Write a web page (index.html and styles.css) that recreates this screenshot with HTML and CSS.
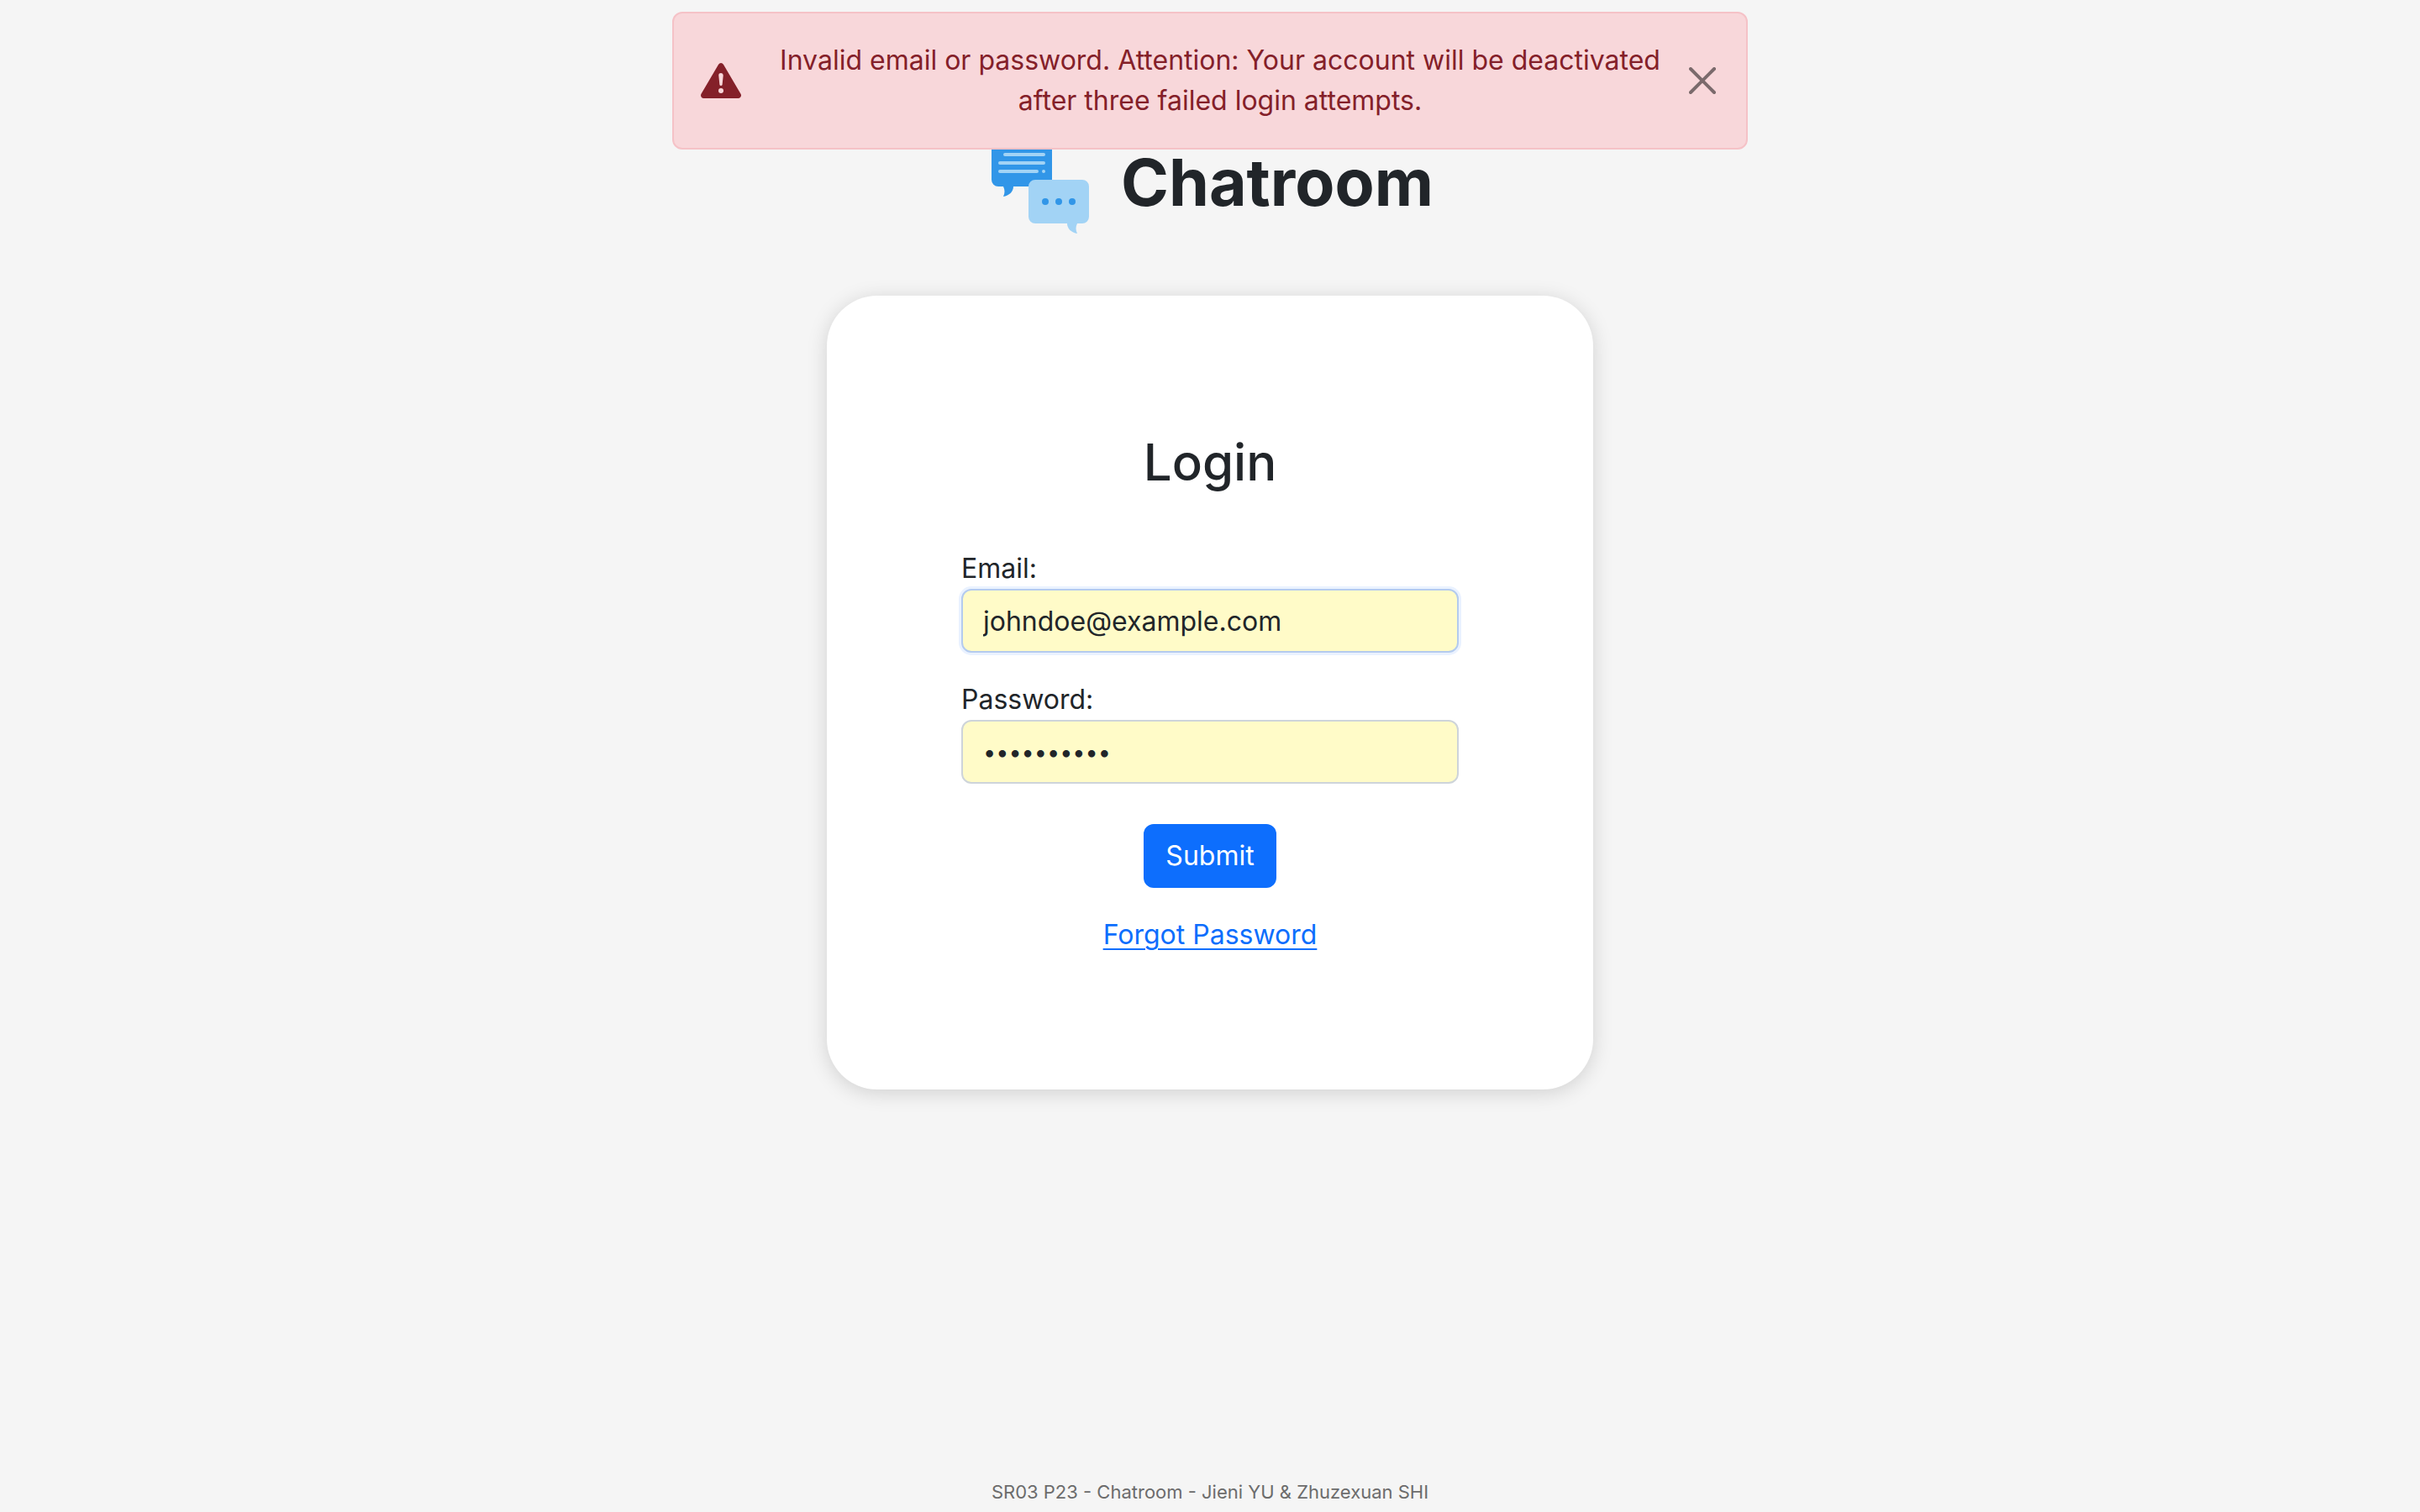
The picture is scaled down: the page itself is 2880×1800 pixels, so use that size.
FILE: index.html
```html
<!DOCTYPE html>
<html lang="en">
<head>
  <meta charset="utf-8">
  <meta name="viewport" content="width=device-width, initial-scale=1">
  <title>Chatroom - Login</title>
  <link rel="stylesheet" href="styles.css">
</head>
<body class="page">
  <div class="alert" role="alert">
    <svg class="alert-icon" viewBox="0 0 16 16" fill="currentColor" aria-hidden="true">
      <path d="M8.982 1.566a1.13 1.13 0 0 0-1.96 0L.165 13.233c-.457.778.091 1.767.98 1.767h13.713c.889 0 1.438-.99.98-1.767L8.982 1.566zM8 5c.535 0 .954.462.9.995l-.35 3.507a.552.552 0 0 1-1.1 0L7.1 5.995A.905.905 0 0 1 8 5zm.002 6a1 1 0 1 1 0 2 1 1 0 0 1 0-2z"/>
    </svg>
    <p class="alert-text">Invalid email or password. Attention: Your account will be deactivated after three failed login attempts.</p>
    <button class="alert-close" type="button" aria-label="Close">
      <svg class="close-icon" viewBox="0 0 16 16" aria-hidden="true">
        <path d="M.293.293a1 1 0 0 1 1.414 0L8 6.586 14.293.293a1 1 0 1 1 1.414 1.414L9.414 8l6.293 6.293a1 1 0 0 1-1.414 1.414L8 9.414l-6.293 6.293a1 1 0 0 1-1.414-1.414L6.586 8 .293 1.707a1 1 0 0 1 0-1.414z"/>
      </svg>
    </button>
  </div>

  <header class="brand">
    <svg class="logo" viewBox="-6 -6 128 128" aria-hidden="true">
      <path fill="#3196e8" d="M8 0H64a8 8 0 0 1 8 8V60H26C26 66 21 71 14 72C16 68 16 64 14 60H8a8 8 0 0 1-8-8V8a8 8 0 0 1 8-8z"/>
      <path fill="none" stroke="#a2d3f5" stroke-width="4" stroke-linecap="round" d="M10 12H62M16 22H62M10 32H62M10 42H54M62 42H62"/>
      <path fill="#a2d3f5" d="M52 52H108a8 8 0 0 1 8 8V96a8 8 0 0 1-8 8H102C100 108 100 112 102 116C95 115 90 110 90 104H52a8 8 0 0 1-8-8V60a8 8 0 0 1 8-8z"/>
      <g fill="#3196e8"><circle cx="64" cy="78" r="4"/><circle cx="80" cy="78" r="4"/><circle cx="96" cy="78" r="4"/></g>
    </svg>
    <h1 class="brand-name">Chatroom</h1>
  </header>

  <main class="card">
    <h2 class="card-title">Login</h2>
    <form class="form">
      <div class="field">
        <label for="email">Email:</label>
        <input class="input input-active" id="email" type="email" value="johndoe@example.com">
      </div>
      <div class="field">
        <label for="password">Password:</label>
        <input class="input input-password" id="password" type="password" value="mypassword">
      </div>
      <button class="submit" type="submit">Submit</button>
    </form>
    <a class="forgot" href="#forgot">Forgot Password</a>
  </main>

  <footer class="footer">SR03 P23 - Chatroom - Jieni YU &amp; Zhuzexuan SHI</footer>
</body>
</html>
```
FILE: styles.css
```css
*,
*::before,
*::after {
  box-sizing: border-box;
}

.page {
  display: flex;
  flex-direction: column;
  align-items: center;
  min-height: 100vh;
  margin: 0;
  padding-top: 156px;
  background: #f5f5f5;
  color: #212529;
  font-family: Inter, "Liberation Sans", sans-serif;
  font-size: 32px;
  line-height: 48px;
}

/* Floating error message over the header */
.alert {
  position: absolute;
  top: 14px;
  left: 0;
  right: 0;
  display: flex;
  align-items: center;
  gap: 32px;
  max-width: 1280px;
  margin: 0 auto;
  padding: 32px 16px 32px 32px;
  border: 2px solid #f5c2c7;
  border-radius: 12px;
  background: #f8d7da;
  color: #842029;
}

.alert-icon {
  flex: none;
  width: 48px;
  height: 48px;
}

.alert-text {
  flex: 1;
  margin: 0 -32px 0 0;
  text-align: center;
}

.alert-close {
  flex: none;
  display: flex;
  padding: 20px;
  border: 0;
  background: none;
  opacity: 0.5;
  cursor: pointer;
}

.close-icon {
  width: 32px;
  height: 32px;
}

.brand {
  display: flex;
  align-items: center;
  gap: 32px;
}

.logo {
  width: 128px;
  height: 128px;
}

.brand-name {
  margin: 0 0 6px;
  font-size: 77px;
  font-weight: 700;
  line-height: 96px;
}

.card {
  display: flex;
  flex-direction: column;
  align-items: center;
  gap: 32px;
  width: 100%;
  max-width: 912px;
  margin-top: 68px;
  padding: 160px;
  border-radius: 60px;
  background: #fff;
  box-shadow: 0 4px 24px rgba(0, 0, 0, 0.15);
}

.card-title {
  margin: 0 0 32px;
  font-size: 60px;
  font-weight: 500;
  line-height: 77px;
}

.form {
  display: flex;
  flex-direction: column;
  align-items: center;
  gap: 32px;
  width: 100%;
}

.field {
  display: flex;
  flex-direction: column;
  width: 100%;
}

.input {
  width: 100%;
  height: 76px;
  padding: 12px 24px;
  border: 2px solid #ced4da;
  border-radius: 12px;
  outline: 0;
  background: #fffbc8;
  color: inherit;
  font: inherit;
}

.input-active {
  border-color: #b4cbee;
  box-shadow: 0 0 0 3px #eaf2ff;
}

.input-password {
  font-size: 27px;
}

.submit {
  margin-top: 16px;
  padding: 14px 26px;
  border: 0;
  border-radius: 12px;
  background: #0d6efd;
  color: #fff;
  font: inherit;
  cursor: pointer;
}

.forgot {
  color: #0d6efd;
  text-decoration-thickness: 2px;
  text-underline-offset: 5px;
}

.footer {
  margin-top: auto;
  padding-bottom: 6px;
  color: #6c6c6c;
  font-size: 22px;
  line-height: 36px;
}
```
